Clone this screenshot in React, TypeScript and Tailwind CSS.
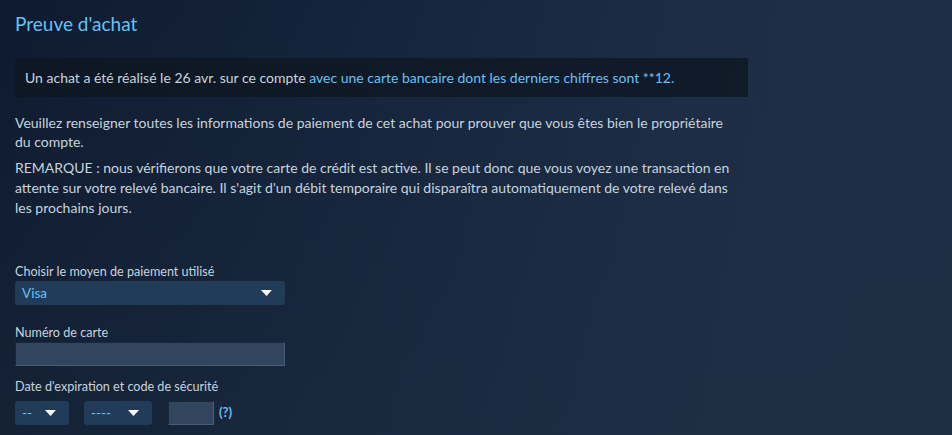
import React from "react";

function Arrow() {
  return (
    <svg width="11" height="6" viewBox="0 0 11 6" className="shrink-0">
      <path d="M0 0 H11 L5.5 6 Z" fill="#ffffff" />
    </svg>
  );
}

function Select({ value, className }: { value: string; className: string }) {
  return (
    <div
      className={`flex items-center justify-between rounded-[3px] bg-[#213c58] pl-[7px] pr-[13px] h-[24px] text-[13.5px] text-[#67c1f5] ${className}`}
    >
      <span>{value}</span>
      <Arrow />
    </div>
  );
}

export default function App() {
  return (
    <div
      className="min-h-screen w-full bg-[linear-gradient(100deg,#0e1a2f_0%,#15243b_35%,#1d2d46_70%,#1f2e45_100%)] text-[#c6d4df]"
      style={{ fontFamily: "Lato, 'Liberation Sans', Arial, sans-serif" }}
    >
      <div className="min-h-screen w-full bg-[linear-gradient(180deg,rgba(0,0,0,0)_0%,rgba(30,45,62,0.35)_100%)] px-[15px] pt-[12px] pb-[8px]">
        <h1 className="text-[19px] leading-[24px] text-[#67c1f5] font-normal">Preuve d'achat</h1>

        <div className="mt-[22px] w-[733px] h-[39px] bg-[#0e1622]/80 flex items-center px-[10px] text-[14px]">
          <span>
            Un achat a été réalisé le 26 avr. sur ce compte{" "}
            <span className="text-[#67c1f5]">avec une carte bancaire dont les derniers chiffres sont **12.</span>
          </span>
        </div>

        <div className="mt-[16px] w-[715px] text-[14px] leading-[19px]">
          <p>
            Veuillez renseigner toutes les informations de paiement de cet achat pour prouver que vous êtes bien le
            propriétaire du compte.
          </p>
          <p className="mt-[7px] leading-[20px]">
            REMARQUE : nous vérifierons que votre carte de crédit est active. Il se peut donc que vous voyez une
            transaction en attente sur votre relevé bancaire. Il s'agit d'un débit temporaire qui disparaîtra
            automatiquement de votre relevé dans les prochains jours.
          </p>
        </div>

        <div className="mt-[46px] text-[12.6px]">
          <div className="leading-[16px]">Choisir le moyen de paiement utilisé</div>
          <Select value="Visa" className="mt-[1px] w-[270px]" />

          <div className="mt-[20px] leading-[16px]">Numéro de carte</div>
          <div className="mt-[1px] w-[270px] h-[24px] bg-[#32455e] border border-t-[#1c2737] border-l-[#1c2737] border-r-[#4a5d76] border-b-[#4a5d76]" />

          <div className="mt-[13px] leading-[16px]">Date d'expiration et code de sécurité</div>
          <div className="mt-[6px] flex items-center">
            <Select value="--" className="w-[54px]" />
            <Select value="----" className="ml-[15px] w-[68px]" />
            <div className="ml-[16px] w-[46px] h-[24px] bg-[#32455e] border border-t-[#1c2737] border-l-[#1c2737] border-r-[#4a5d76] border-b-[#4a5d76]" />
            <span className="ml-[5px] text-[#67c1f5] font-bold text-[13px]">(?)</span>
          </div>
        </div>
      </div>
    </div>
  );
}
